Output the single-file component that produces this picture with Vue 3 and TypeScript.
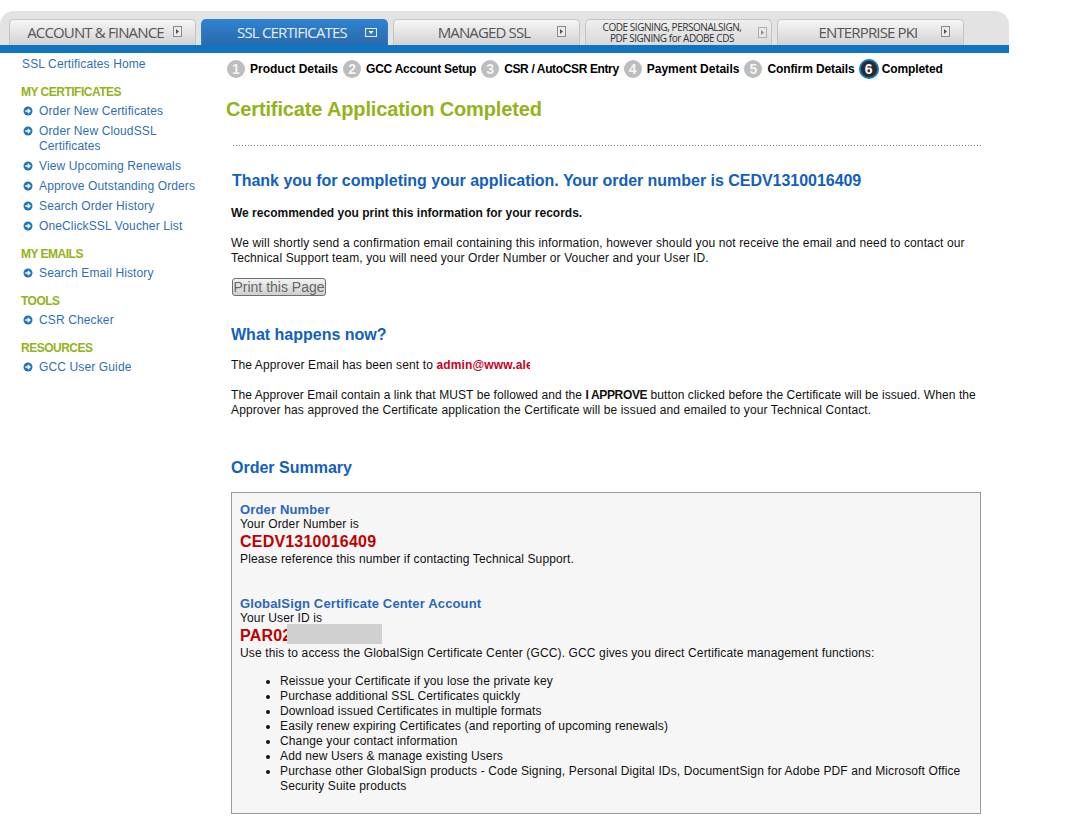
<script setup lang="ts">
interface Tab { label: string; active?: boolean; small?: boolean; lines?: string[] }
const tabs: Tab[] = [
  { label: 'ACCOUNT & FINANCE' },
  { label: 'SSL CERTIFICATES', active: true },
  { label: 'MANAGED SSL' },
  { label: '', small: true, lines: ['CODE SIGNING, PERSONALSIGN,', 'PDF SIGNING for ADOBE CDS'] },
  { label: 'ENTERPRISE PKI' },
]
const steps = ['Product Details', 'GCC Account Setup', 'CSR / AutoCSR Entry', 'Payment Details', 'Confirm Details', 'Completed']
const groups = [
  { title: 'MY CERTIFICATES', links: ['Order New Certificates', 'Order New CloudSSL Certificates', 'View Upcoming Renewals', 'Approve Outstanding Orders', 'Search Order History', 'OneClickSSL Voucher List'] },
  { title: 'MY EMAILS', links: ['Search Email History'] },
  { title: 'TOOLS', links: ['CSR Checker'] },
  { title: 'RESOURCES', links: ['GCC User Guide'] },
]
const benefits = [
  'Reissue your Certificate if you lose the private key',
  'Purchase additional SSL Certificates quickly',
  'Download issued Certificates in multiple formats',
  'Easily renew expiring Certificates (and reporting of upcoming renewals)',
  'Change your contact information',
  'Add new Users & manage existing Users',
  'Purchase other GlobalSign products - Code Signing, Personal Digital IDs, DocumentSign for Adobe PDF and Microsoft Office Security Suite products',
]
</script>

<template>
  <div class="page">
    <header class="nav">
      <div class="tabs">
        <div v-for="t in tabs" :key="t.label || 'sign'" class="tab" :class="{ active: t.active, small: t.small }">
          <span v-if="t.lines" class="tab-label two"><span v-for="l in t.lines" :key="l">{{ l }}</span></span>
          <span v-else class="tab-label">{{ t.label }}</span>
          <svg class="tab-icon" :class="{ faint: t.small }" width="9" height="11" viewBox="0 0 9 11" v-if="!t.active">
            <rect x="0.5" y="0.5" width="8" height="10" fill="#ececec" stroke="#8a8a8a" />
            <path d="M3 3 L6 5.5 L3 8 Z" fill="#555" />
          </svg>
          <svg class="tab-icon" width="12" height="9" viewBox="0 0 12 9" v-else>
            <rect x="0.5" y="0.5" width="11" height="8" fill="#2f79bf" stroke="#e8eef5" />
            <path d="M3.5 3 L8.5 3 L6 6 Z" fill="#fff" />
          </svg>
        </div>
      </div>
      <div class="bar"></div>
    </header>

    <div class="body">
      <aside class="side">
        <a class="home">SSL Certificates Home</a>
        <section v-for="g in groups" :key="g.title" class="group">
          <h4>{{ g.title }}</h4>
          <ul>
            <li v-for="l in g.links" :key="l">
              <svg width="10" height="10" viewBox="0 0 10 10">
                <circle cx="5" cy="5" r="4.5" fill="#1f76c0" />
                <path d="M2.3 5 H6.5 M4.8 3 L7 5 L4.8 7" fill="none" stroke="#fff" stroke-width="1.3" />
              </svg>
              <span>{{ l }}</span>
            </li>
          </ul>
        </section>
      </aside>

      <main class="main">
        <div class="steps">
          <div v-for="(s, i) in steps" :key="s" class="step" :class="{ current: i === 5 }">
            <span class="num">{{ i + 1 }}</span><span class="step-label">{{ s }}</span>
          </div>
        </div>
        <h1>Certificate Application Completed</h1>
        <div class="dots"></div>
        <h2 class="thanks">Thank you for completing your application. Your order number is CEDV1310016409</h2>
        <p class="rec"><b>We recommended you print this information for your records.</b></p>
        <p class="para">We will shortly send a confirmation email containing this information, however should you not receive the email and need to contact our Technical Support team, you will need your Order Number or Voucher and your User ID.</p>
        <button class="print" type="button">Print this Page</button>
        <h2 class="now">What happens now?</h2>
        <p class="sent">The Approver Email has been sent to <b class="red">admin@www.ale</b></p>
        <p class="para approver"><span class="first-line">The Approver Email contain a link that MUST be followed and the <b>I APPROVE</b> button clicked before the Certificate will be issued. When the</span> Approver has approved the Certificate application the Certificate will be issued and emailed to your Technical Contact.</p>
        <h2 class="summary">Order Summary</h2>
        <div class="box">
          <h3>Order Number</h3>
          <div>Your Order Number is</div>
          <div class="big">CEDV1310016409</div>
          <div>Please reference this number if contacting Technical Support.</div>
          <h3 class="second">GlobalSign Certificate Center Account</h3>
          <div>Your User ID is</div>
          <div class="big id"><span>PAR02</span><i class="mask"></i></div>
          <div>Use this to access the GlobalSign Certificate Center (GCC). GCC gives you direct Certificate management functions:</div>
          <ul>
            <li v-for="b in benefits" :key="b">{{ b }}</li>
          </ul>
        </div>
      </main>
    </div>
  </div>
</template>

<style>
html, body { background: #fff; }
</style>

<style scoped>
.page { width: 1068px; height: 821px; overflow: hidden; font-family: "Liberation Sans", Arial, sans-serif; font-size: 12px; letter-spacing: 0.13px; color: #111; }
.nav { width: 1009px; padding-top: 11px; }
.tabs { display: flex; gap: 5px; height: 34px; padding: 8px 0 0 9px; box-sizing: border-box; background: #e3e3e3; border-radius: 14px 14px 0 0; }
.tab { width: 187px; height: 26px; box-sizing: border-box; display: flex; align-items: center; position: relative; padding-bottom: 2px; border: 1px solid #c4c4c4; border-bottom: 0; border-radius: 5px 5px 0 0; background: linear-gradient(#f6f6f6, #d2d2d2); color: #555; font-family: "Open Sans", sans-serif; letter-spacing: 0; }
.tab.active { background: linear-gradient(#2f82cf, #2a69ab); border-color: #2f7fca; color: #e6eef6; }
.tab-label { flex: 1; text-align: center; font-size: 15px; letter-spacing: -0.85px; padding-right: 5px; white-space: nowrap; }
.tab:first-child .tab-label { padding-right: 14px; }
.tab-label.two { display: flex; flex-direction: column; font-size: 10px; letter-spacing: -0.45px; line-height: 11px; color: #333; padding-right: 13px; }
.tab.small { background: linear-gradient(#efefef, #d9d9d9); padding-bottom: 0; }
.tab-icon { position: absolute; right: 13px; top: 6px; }
.tab.active .tab-icon { right: 10px; top: 8px; }
.tab-icon.faint { opacity: 0.6; right: 4px; top: 7px; }
.bar { height: 8px; background: #1174be; }
.body { display: flex; }
.side { width: 231px; box-sizing: border-box; padding: 4px 0 0 22px; flex: none; color: #2f6fb5; }
.home { display: block; line-height: 14px; }
.group { margin-top: 13px; }
.group:first-of-type { margin-top: 14px; }
.group h4 { margin: 0 0 0 -1px; font-size: 12px; line-height: 14px; color: #94b21a; font-weight: bold; letter-spacing: -0.5px; }
.group ul { list-style: none; margin: 5px 0 0; padding: 0; }
.group li { display: flex; align-items: flex-start; gap: 6px; line-height: 15px; margin-bottom: 5px; padding-left: 1px; width: 175px; }
.group li svg { flex: none; margin-top: 2px; }
.main { width: 750px; flex: none; }
.steps { display: flex; margin: 5px 0 0 -4px; height: 22px; align-items: center; gap: 5px; white-space: nowrap; letter-spacing: 0; }
.step { display: flex; align-items: center; gap: 5px; font-weight: bold; color: #000; }
.step:nth-child(2) .step-label { letter-spacing: -0.24px; }
.step:nth-child(3) .step-label { letter-spacing: -0.37px; }
.step:nth-child(5) .step-label { letter-spacing: -0.1px; }
.step:nth-child(6) { gap: 3px; margin-left: -1px; }
.step:nth-child(6) .step-label { letter-spacing: -0.1px; }
.num { width: 18px; height: 18px; border-radius: 50%; background: #bdbdbd; color: #f4f4f4; display: flex; align-items: center; justify-content: center; font-size: 14px; font-weight: bold; }
.step.current .num { width: 16px; height: 16px; background: #2a2a2a; color: #fff; border: 2px solid #1174be; }
h1 { margin: 17px 0 0 -5px; font-size: 20px; line-height: 24px; color: #94b21a; font-weight: bold; letter-spacing: -0.14px; }
.dots { margin: 24px 0 0 2px; width: 748px; height: 1px; background: repeating-linear-gradient(90deg, #777 0 1px, transparent 1px 3px); }
h2 { margin: 0; font-weight: bold; color: #1260bd; font-size: 16px; line-height: 20px; letter-spacing: 0; }
.thanks { margin: 25px 0 0 1px; letter-spacing: -0.03px; }
p { margin: 0; line-height: 15px; }
.rec { margin-top: 15px; letter-spacing: 0; }
.para { margin-top: 15px; }
.print { display: block; margin: 12px 0 0 1px; padding: 0; height: 18px; width: 94px; font: 14px/16px "Liberation Sans", Arial, sans-serif; color: #666; background: linear-gradient(#f2f2f2, #cfcfcf); border: 1px solid #6f6f6f; border-radius: 3px; }
.now { margin-top: 29px; }
.sent { margin-top: 13px; }
.red { color: #c8001e; display: inline-block; width: 94px; height: 15px; overflow: hidden; vertical-align: bottom; white-space: nowrap; }
.approver { margin-top: 15px; }
.first-line { display: block; white-space: nowrap; letter-spacing: 0.07px; }
.first-line b { letter-spacing: -0.35px; }
.summary { margin-top: 40px; }
.box { margin-top: 14px; width: 750px; height: 322px; box-sizing: border-box; border: 1px solid #9a9a9a; background: #f6f6f6; padding: 9px 8px; line-height: 15px; }
h3 { margin: 0; font-size: 13px; line-height: 15px; color: #2b66bb; font-weight: bold; letter-spacing: 0.15px; }
.second { margin-top: 29px; }
.big { font-size: 16px; line-height: 20px; font-weight: bold; color: #c00000; letter-spacing: 0.2px; }
.id { position: relative; }
.mask { position: absolute; left: 47px; top: -2px; width: 95px; height: 20px; background: #d0d0d0; }
.box ul { margin: 13px 0 0; padding-left: 40px; }
.box li { line-height: 15px; }
</style>
